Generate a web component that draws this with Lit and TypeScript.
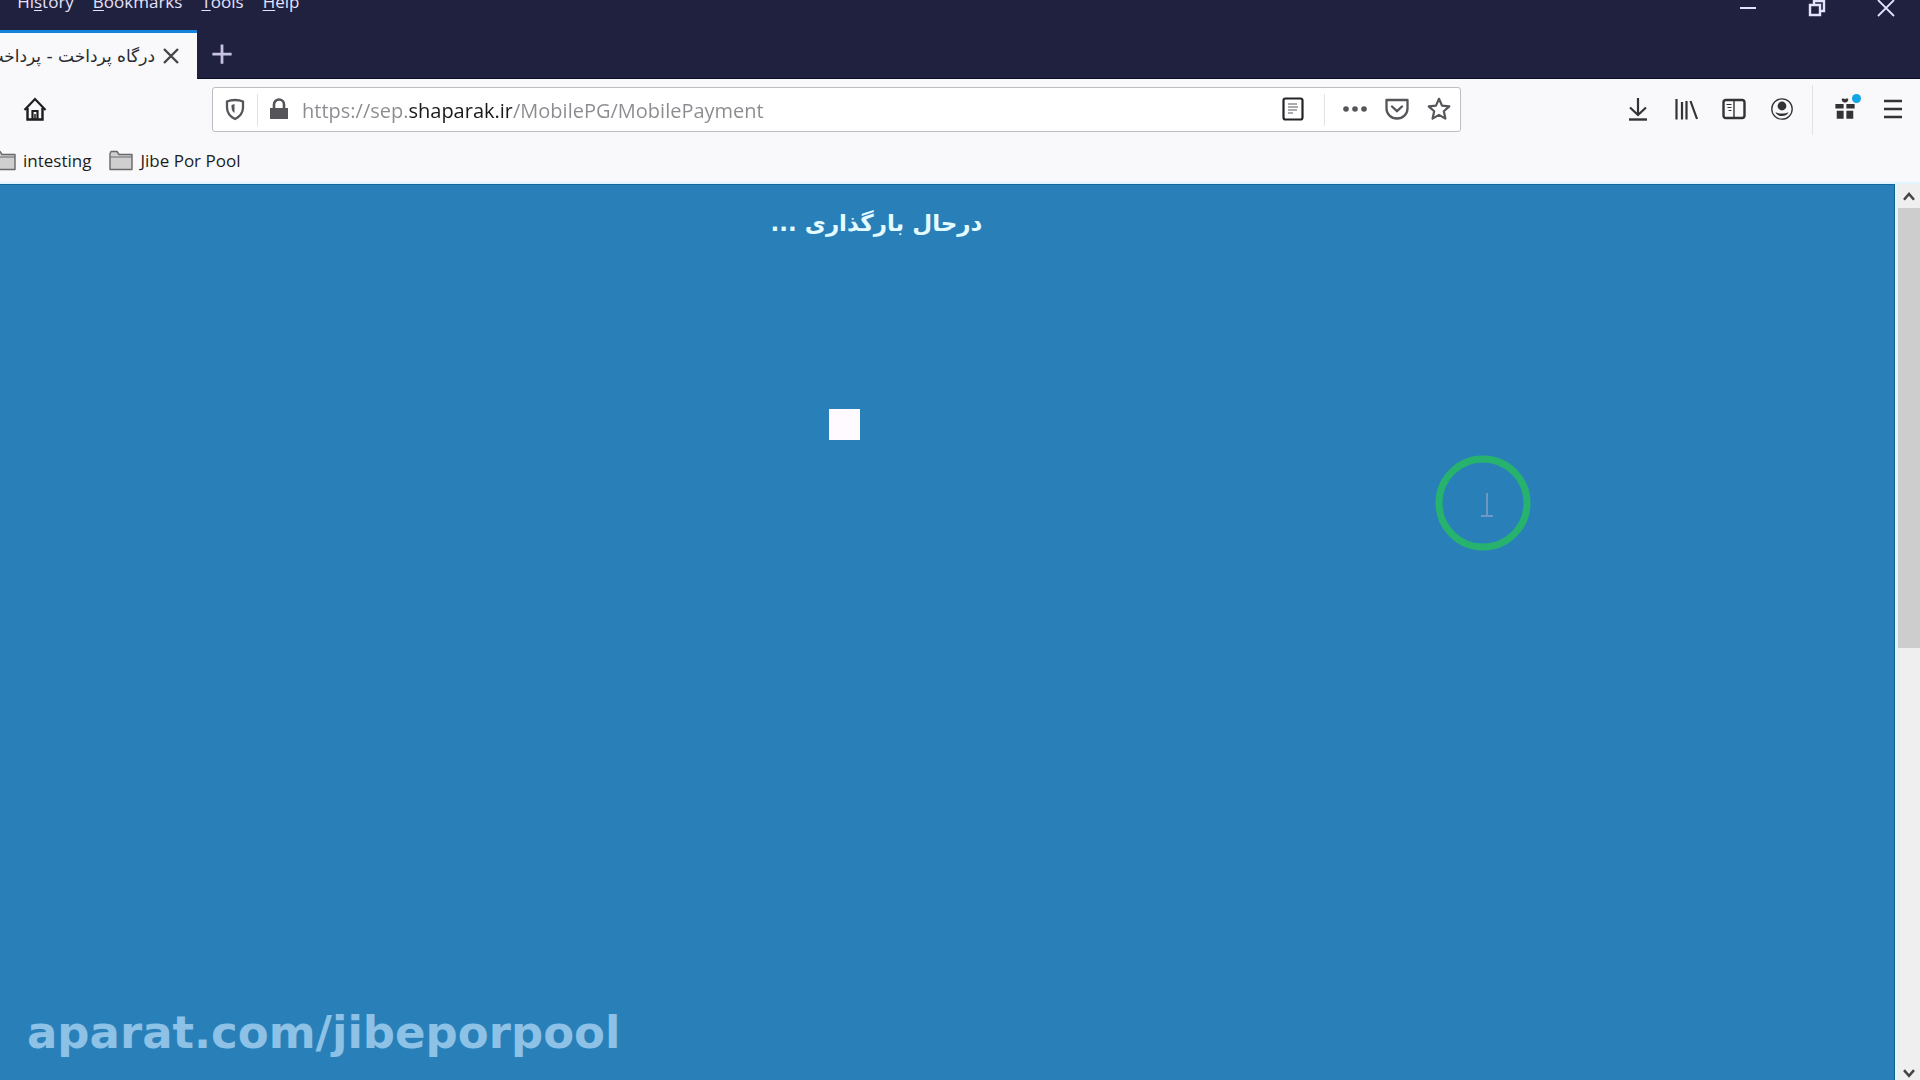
import { LitElement, html, css, svg } from "lit";
import { customElement, property } from "lit/decorators.js";

const icons: Record<string, unknown> = {
  close: svg`<path d="M5 5l14 14M19 5L5 19" stroke-width="2.4"/>`,
  plus: svg`<path d="M12 1.500v21M1.500 12h21" stroke-width="3"/>`,
  minimize: svg`<path d="M4 12h16" stroke-width="2"/>`,
  restore: svg`<path d="M5 9h10v10H5z" stroke-width="2.400"/><path d="M9 9V5h10v10h-4" stroke-width="2.400"/>`,
  exit: svg`<path d="M4 4l16 16M20 4L4 20" stroke-width="1.800"/>`,
  home: svg`<path d="M1.500 13L12 2l10.500 11" stroke-width="2.200"/><path d="M4.500 11v11.500h15V11" stroke-width="2.400"/><path d="M9.500 22v-8h5v8" stroke-width="2.200"/><path d="M12 17v5" stroke-width="1.500"/>`,
  shield: svg`<path d="M12 3c3 0 6 .6 8 1.500v6c0 5.500-3 9-8 11.500-5-2.500-8-6-8-11.500v-6C6 3.600 9 3 12 3z" stroke-width="2.300"/><path d="M11.500 7v9c-2-1-3-3-3-6V8z" fill="currentColor" stroke="none"/>`,
  lock: svg`<path d="M3 11h18v11H3z" fill="currentColor" stroke="none"/><path d="M7 12V7.500a5 5 0 0 1 10 0V12" stroke-width="2.600"/>`,
  reader: svg`<rect x="2.500" y="1.500" width="19" height="21" rx="2" stroke-width="2.200"/><path d="M7 7h9M7 10h10M7 13h9M7 16h5" stroke-width="1.200" opacity=".75"/>`,
  dots: svg`<g fill="currentColor" stroke="none"><circle cx="3" cy="12" r="2.800"/><circle cx="12" cy="12" r="2.800"/><circle cx="21" cy="12" r="2.800"/></g>`,
  pocket: svg`<path d="M1.500 3h21v8.500a10.500 10 0 0 1-21 0z" stroke-width="2.300" stroke-linejoin="round"/><path d="M7 9.500l5 4.700 5-4.700" stroke-width="2.400" stroke-linecap="round"/>`,
  star: svg`<path d="M12 1.800l3 6.800 7.300.8-5.500 4.900 1.600 7.300L12 17.900l-6.400 3.700 1.600-7.300-5.500-4.900 7.300-.8z" stroke-width="2.200" stroke-linejoin="round"/>`,
  download: svg`<path d="M12 1v17M4 10.500l8 7.500 8-7.500" stroke-width="2.200"/><path d="M3 22.500h18" stroke-width="2.400"/>`,
  library: svg`<path d="M2.500 2v20.500M8 5v17.500M12.500 4v18.500M16.500 4l6.500 18" stroke-width="2.200"/>`,
  sidebar: svg`<rect x="1.500" y="3" width="21" height="18" rx="2.500" stroke-width="2.400"/><path d="M12 3v18" stroke-width="1.400"/><path d="M4.500 7.500h5M5.500 10.500h4M6.500 13.500h3" stroke-width="1.200"/>`,
  account: svg`<circle cx="12" cy="12" r="10.200" stroke-width="1.300"/><circle cx="12" cy="9" r="4.400" fill="currentColor" stroke="none"/><path d="M5.500 15c1.500 1.200 4 1.600 6.500 1.600s5-.4 6.500-1.600c-.8 2.800-3.200 4-6.500 4s-5.700-1.200-6.500-4z" fill="currentColor" stroke="none"/>`,
  gift: svg`<g fill="currentColor" stroke="none"><path d="M1.500 6.500h9v5h-9zM13.500 6.500h9v5h-9zM3 14h7.500v8.500H3zM13.500 14H21v8.500h-7.500z"/><path d="M8.500 1c1.500-1 3-.2 3.500.6.500-.8 2-1.600 3.500-.6.500 1.700-1.500 4-3.500 4s-4-2.300-3.500-4z"/></g>`,
  menu: svg`<path d="M3 4h18M3 12h18M3 20h18" stroke-width="2.300"/>`,
  up: svg`<path d="M6 16.500l6-7 6 7" stroke-width="3"/>`,
  down: svg`<path d="M6 8.500l6 7 6-7" stroke-width="3"/>`,
  folder: svg`<path d="M1 20.500V4.500l1-2h6l2 3h13v15z" fill="#cfcfd0" stroke-width="1.400" stroke-linejoin="round"/><path d="M1 8h22" stroke-width="1"/>`,
};

@customElement("ui-icon")
class UiIcon extends LitElement {
  @property() name = "";
  static styles = css`
    :host { display: block; flex: none; width: 24px; height: 24px; }
    svg { display: block; width: 100%; height: 100%; overflow: visible; fill: none; stroke: currentColor; }
  `;
  render() {
    return html`<svg viewBox="0 0 24 24" aria-hidden="true">${icons[this.name]}</svg>`;
  }
}

@customElement("app-root")
class AppRoot extends LitElement {
  static styles = css`
    :host {
      display: flex; flex-direction: column; min-height: 100vh; overflow: hidden;
      position: relative; background: #2980b9; color: #1d1d20;
      font-family: "Open Sans", "Noto Sans", "DejaVu Sans", sans-serif;
    }
    * { box-sizing: border-box; }
    button, input { font: inherit; color: inherit; border: 0; background: none; padding: 0; margin: 0; outline: 0; }
    button { display: flex; align-items: center; justify-content: center; }

    .titlebar { background: #20203f; color: #e4e2fb; border-bottom: 1px solid #0b0b28; }
    .menubar { display: flex; justify-content: space-between; height: 30px; }
    .menus { display: flex; gap: 19px; margin-top: -12px; margin-left: -39px; height: 28px; font-size: 17px; line-height: 28px; }
    .menus button { text-underline-offset: 2px; }
    .wincontrols { display: flex; gap: 45px; padding-right: 22px; margin-top: -4px; height: 24px; }
    .tabs { display: flex; height: 48px; }
    .tab {
      display: flex; align-items: center; justify-content: flex-end; gap: 4px; width: 197px; padding-right: 14px;
      overflow: hidden; background: #f9f9fb; color: #2a2a30; border-top: 3px solid #1682dc; margin-bottom: -1px;
    }
    .tablabel { direction: rtl; white-space: nowrap; font: 17px/24px "DejaVu Sans", sans-serif; flex: none; }
    .tab button { color: #45454a; }
    .newtab { width: 50px; color: #c6c4e2; }
    .newtab ui-icon { width: 22px; height: 22px; }

    .chrome { background: #f9f9fb; border-bottom: 2px solid #e2f5fd; }
    .nav { display: flex; align-items: center; height: 61px; padding: 0 11px 0 19px; }
    .nav button { width: 32px; height: 32px; padding-bottom: 2px; }
    .urlbar {
      flex: 1; display: flex; align-items: center; height: 45px; margin: 0 161px; padding-right: 5px;
      background: #fff; border: 1px solid #bebec2; border-radius: 3px; color: #55555a;
    }
    .nav .ident { width: 44px; }
    .nav .lock { width: 42px; }
    .line { width: 1px; height: 32px; background: #e2e2e6; }
    .url {
      flex: 1; min-width: 0; height: 32px; padding-top: 2px; margin-left: 2px; font-size: 20px; color: transparent;
      background: linear-gradient(90deg, #8b8b90 0 107px, #18181b 107px 210px, #8b8b90 210px);
      -webkit-background-clip: text; background-clip: text;
    }
    .actions { display: flex; gap: 10px; margin-left: 14px; }
    .reader { margin-right: 15px; color: #242428; }
    .tools { display: flex; align-items: center; gap: 16px; }
    .tools .line { height: 50px; margin: 0 0 0 -2px; }
    .tools button { color: #333337; }
    .gift { position: relative; }
    .gift ui-icon { width: 22px; height: 22px; }
    .badge { position: absolute; top: 0; right: 0; width: 9px; height: 9px; border-radius: 50%; background: #10a5e5; }
    .bookmarks { display: flex; gap: 18px; height: 42px; margin-left: -8px; align-items: center; font-size: 17px; line-height: 24px; }
    .bookmarks a { display: flex; gap: 7px; align-items: center; color: inherit; text-decoration: none; }
    .bookmarks ui-icon { color: #68686c; }

    .viewport { flex: 1; display: flex; }
    .page { flex: 1; display: flex; flex-direction: column; align-items: center; border-top: 1px solid #14699c; border-right: 1px solid #0e6490; color: #e4fbff; }
    .loading { margin: 18px 141px 0 0; font: bold 23px/40px "DejaVu Sans", sans-serif; }
    .block { width: 31px; height: 31px; margin: 166px 206px 0 0; background: #fffaff; }
    .scrollbar { width: 25px; display: flex; flex-direction: column; background: #efeff0; border-left: 2px solid #e2f8ff; color: #444; }
    .scrollbar button { width: 23px; height: 24px; }
    .scrollbar ui-icon { width: 20px; height: 20px; }
    .scrollbar .down { height: 14px; }
    .track { flex: 1; padding-left: 1px; }
    .thumb { height: 51.3%; background: #cdcdcd; }

    .pointer { position: absolute; left: 1435px; top: 455px; width: 96px; height: 96px; }
    .watermark { position: absolute; left: 27px; bottom: 21px; color: #8dc1e6; font: bold 45px/52px "DejaVu Sans", sans-serif; white-space: nowrap; }
  `;

  private tool(name: string, label: string, cls = "") {
    return html`<button class=${cls} aria-label=${label}><ui-icon name=${name}></ui-icon></button>`;
  }

  render() {
    return html`
      <header>
        <div class="titlebar">
          <div class="menubar">
            <nav class="menus">
              <button><span><u>V</u>iew</span></button>
              <button><span>Hi<u>s</u>tory</span></button>
              <button><span><u>B</u>ookmarks</span></button>
              <button><span><u>T</u>ools</span></button>
              <button><span><u>H</u>elp</span></button>
            </nav>
            <div class="wincontrols">
              ${this.tool("minimize", "Minimize")}${this.tool("restore", "Restore")}${this.tool("exit", "Close")}
            </div>
          </div>
          <div class="tabs">
            <div class="tab">
              <span class="tablabel">درگاه پرداخت - پرداخت</span>
              ${this.tool("close", "Close tab")}
            </div>
            ${this.tool("plus", "New tab", "newtab")}
          </div>
        </div>
        <div class="chrome">
          <div class="nav">
            ${this.tool("home", "Home")}
            <div class="urlbar">
              ${this.tool("shield", "Tracking protection", "ident")}
              <span class="line"></span>
              ${this.tool("lock", "Site information", "lock")}
              <input class="url" aria-label="Address" value="https://sep.shaparak.ir/MobilePG/MobilePayment" />
              ${this.tool("reader", "Reader view", "reader")}
              <span class="line"></span>
              <div class="actions">
                ${this.tool("dots", "Page actions")}${this.tool("pocket", "Save to Pocket")}${this.tool("star", "Bookmark")}
              </div>
            </div>
            <div class="tools">
              ${this.tool("download", "Downloads")}${this.tool("library", "Library")}
              ${this.tool("sidebar", "Sidebars")}${this.tool("account", "Account")}
              <span class="line"></span>
              <button class="gift" aria-label="What's new"><ui-icon name="gift"></ui-icon><span class="badge"></span></button>
              ${this.tool("menu", "Open menu")}
            </div>
          </div>
          <div class="bookmarks">
            <a href="#"><ui-icon name="folder"></ui-icon>intesting</a>
            <a href="#"><ui-icon name="folder"></ui-icon>Jibe Por Pool</a>
          </div>
        </div>
      </header>
      <div class="viewport">
        <main class="page">
          <div class="loading" dir="rtl">درحال بارگذاری ...</div>
          <div class="block"></div>
        </main>
        <div class="scrollbar">
          ${this.tool("up", "Scroll up")}
          <div class="track"><div class="thumb"></div></div>
          ${this.tool("down", "Scroll down", "down")}
        </div>
      </div>
      <svg class="pointer" viewBox="0 0 96 96" fill="none" aria-hidden="true">
        <circle cx="48" cy="48" r="44" stroke="#27b36d" stroke-width="7" />
        <path d="M52 38v22M46 61h12" stroke="#6e97c4" stroke-width="2" />
      </svg>
      <div class="watermark">aparat.com/jibeporpool</div>
    `;
  }
}
